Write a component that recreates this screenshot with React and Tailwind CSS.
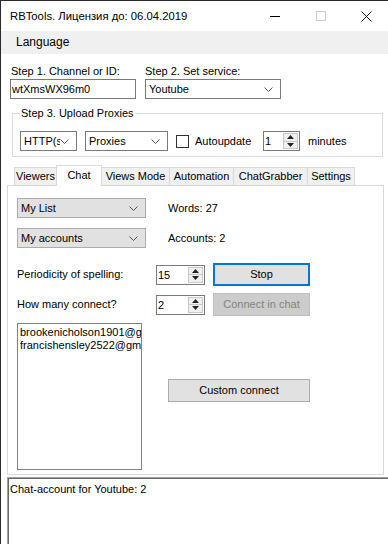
const Chevron = () => (
  <svg width="9" height="5" viewBox="0 0 9 5" className="shrink-0">
    <polyline points="0.5,0.5 4.5,4.5 8.5,0.5" fill="none" stroke="#555" strokeWidth="1" />
  </svg>
)

function Combo({ text, w, flat = false }) {
  return (
    <div
      className={`flex h-[20px] items-center justify-between overflow-hidden border pl-[3px] pr-[7px] ${
        flat ? 'border-[#adadad] bg-[#e1e1e1]' : 'border-[#7a7a7a] bg-white'
      } ${w}`}
    >
      <span className="overflow-hidden whitespace-nowrap">{text}</span>
      <Chevron />
    </div>
  )
}

function Spin({ value, w }) {
  return (
    <div className={`flex h-[20px] border border-[#7a7a7a] bg-white ${w}`}>
      <span className="flex-1 pl-[1px] leading-[18px]">{value}</span>
      <div className="my-[1px] mr-[1px] flex w-[15px] flex-col border border-[#c8c8c8] bg-[#f0f0f0]">
        <div className="flex flex-1 items-center justify-center border-b border-[#c8c8c8]">
          <svg width="7" height="4" viewBox="0 0 7 4"><polygon points="3.5,0 7,4 0,4" fill="#222" /></svg>
        </div>
        <div className="flex flex-1 items-center justify-center">
          <svg width="7" height="4" viewBox="0 0 7 4"><polygon points="0,0 7,0 3.5,4" fill="#222" /></svg>
        </div>
      </div>
    </div>
  )
}

const tabs = [
  ['Viewers', 'w-[43px]'],
  ['Chat', 'w-[46px]'],
  ['Views Mode', 'w-[69px]'],
  ['Automation', 'w-[65px]'],
  ['ChatGrabber', 'w-[75px]'],
  ['Settings', 'w-[48px]'],
]

export default function App() {
  return (
    <div className="flex h-[544px] w-[388px] flex-col overflow-hidden border-l border-t border-[#2b2b2b] bg-white font-['Liberation_Sans',Arial,sans-serif] text-[11px] leading-[13px] text-black">
      {/* title bar */}
      <div className="flex h-[30px] shrink-0 items-center">
        <span className="pl-[9px] text-[11.3px]">RBTools. Лицензия до: 06.04.2019</span>
        <div className="ml-auto flex items-center">
          <div className="h-[1px] w-[10px] bg-black" />
          <div className="ml-[36px] h-[10px] w-[10px] border border-[#cccccc]" />
          <svg width="11" height="11" viewBox="0 0 11 11" className="ml-[35px] mr-[16px]">
            <path d="M0.5 0.5 L10.5 10.5 M10.5 0.5 L0.5 10.5" stroke="#111" strokeWidth="1" />
          </svg>
        </div>
      </div>

      {/* menu */}
      <div className="flex h-[23px] shrink-0 items-center bg-[#f0f0f0] pl-[15px] text-[12px]">Language</div>

      {/* steps 1 and 2 */}
      <div className="mt-[11px] flex pl-[9px]">
        <div className="w-[126px]">
          <div className="pl-[1px]">Step 1. Channel or ID:</div>
          <div className="mt-[1px] h-[20px] border border-[#7a7a7a] pl-[1px] leading-[18px]">wtXmsWX96m0</div>
        </div>
        <div className="ml-[9px] w-[136px]">
          <div>Step 2. Set service:</div>
          <div className="mt-[1px]">
            <Combo text="Youtube" w="w-[136px]" />
          </div>
        </div>
      </div>

      {/* step 3 group */}
      <div className="ml-[11px] mt-[14px] w-[371px] border border-[#dcdcdc] pb-[5px]">
        <div className="-mt-[7px] ml-[7px] w-fit bg-white px-[1px]">Step 3. Upload Proxies</div>
        <div className="mt-[11px] flex items-center pl-[7px]">
          <Combo text="HTTP(s)" w="w-[57px]" />
          <div className="ml-[8px]">
            <Combo text="Proxies" w="w-[83px]" />
          </div>
          <div className="ml-[8px] h-[13px] w-[13px] border border-[#333] bg-white" />
          <span className="ml-[6px] w-[68px]">Autoupdate</span>
          <Spin value="1" w="w-[37px]" />
          <span className="ml-[8px]">minutes</span>
        </div>
      </div>

      {/* tabs */}
      <div className="mt-[8px] flex h-[20px] items-end pl-[13px]">
        {tabs.map(([name, w], i) =>
          name === 'Chat' ? (
            <div
              key={name}
              className={`relative z-10 -mb-[1px] -ml-[1px] flex h-[21px] items-start justify-center border border-b-0 border-[#d9d9d9] bg-white pt-[3px] ${w}`}
            >
              {name}
            </div>
          ) : (
            <div
              key={name}
              className={`flex h-[18px] items-center justify-center border border-b-0 border-[#d9d9d9] bg-[#f0f0f0] ${i > 0 ? '-ml-[1px]' : ''} ${w}`}
            >
              {name}
            </div>
          )
        )}
      </div>

      {/* tab panel */}
      <div className="ml-[6px] h-[290px] w-[377px] shrink-0 border border-[#d9d9d9] bg-white pl-[9px]">
        <div className="mt-[12px] flex items-center">
          <Combo text="My List" w="w-[129px]" flat />
          <span className="ml-[22px]">Words: 27</span>
        </div>
        <div className="mt-[10px] flex items-center">
          <Combo text="My accounts" w="w-[129px]" flat />
          <span className="ml-[22px]">Accounts: 2</span>
        </div>
        <div className="mt-[15px] flex items-center">
          <span className="w-[139px]">Periodicity of spelling:</span>
          <Spin value="15" w="w-[49px]" />
          <div className="ml-[8px] flex h-[23px] w-[97px] items-center justify-center border-2 border-[#0078d7] bg-[#e1e1e1]">
            Stop
          </div>
        </div>
        <div className="mt-[7px] flex items-center">
          <span className="w-[139px]">How many connect?</span>
          <Spin value="2" w="w-[49px]" />
          <div className="ml-[8px] flex h-[23px] w-[97px] items-center justify-center border border-[#bfbfbf] bg-[#cccccc] text-[#838383]">
            Connect in chat
          </div>
        </div>
        <div className="mt-[7px] flex">
          <div className="h-[147px] w-[125px] overflow-hidden border border-[#828282] pl-[2px] pt-[2px]">
            <div className="whitespace-nowrap">brookenicholson1901@gmail.com</div>
            <div className="whitespace-nowrap">francishensley2522@gmail.com</div>
          </div>
          <div className="ml-[26px] mt-[56px] flex h-[23px] w-[142px] items-center justify-center border border-[#adadad] bg-[#e1e1e1]">
            Custom connect
          </div>
        </div>
      </div>

      {/* log box */}
      <div className="ml-[6px] mt-[2px] flex-1 border-l border-t border-[#a0a0a0]">
        <div className="h-full border-l border-t border-[#696969] bg-white pl-[1px] pt-[4px]">
          Chat-account for Youtube: 2
        </div>
      </div>
    </div>
  )
}
